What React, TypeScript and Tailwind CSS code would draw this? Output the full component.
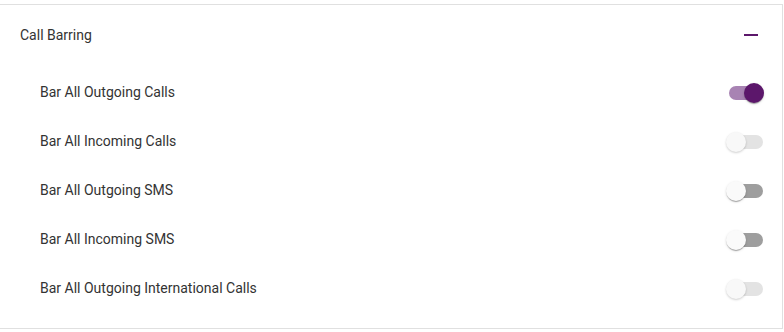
import React from "react";

type Row = { label: string; checked: boolean; disabled: boolean };

const rows: Row[] = [
  { label: "Bar All Outgoing Calls", checked: true, disabled: false },
  { label: "Bar All Incoming Calls", checked: false, disabled: true },
  { label: "Bar All Outgoing SMS", checked: false, disabled: false },
  { label: "Bar All Incoming SMS", checked: false, disabled: false },
  { label: "Bar All Outgoing International Calls", checked: false, disabled: true },
];

function Switch({ checked, disabled }: { checked: boolean; disabled: boolean }) {
  return (
    <div className="relative w-[38px] h-[20px] shrink-0">
      <div
        className={
          "absolute left-[3px] top-[3px] w-[34px] h-[14px] rounded-full " +
          (checked ? "bg-[#a883b3]" : disabled ? "bg-[#e3e3e3]" : "bg-[#9e9e9e]")
        }
      />
      {checked ? (
        <div className="absolute top-0 left-[18px] w-[20px] h-[20px] rounded-full bg-[#5c176b] shadow-[0_2px_1px_-1px_rgba(0,0,0,0.2),0_1px_1px_0_rgba(0,0,0,0.14),0_1px_3px_0_rgba(0,0,0,0.12)]" />
      ) : disabled ? (
        <div className="absolute top-0 left-0 w-[20px] h-[20px] rounded-full bg-[#f8f8f8] shadow-[0_1px_2px_0_rgba(0,0,0,0.12),0_1px_3px_0_rgba(0,0,0,0.08)]" />
      ) : (
        <div className="absolute top-0 left-0 w-[20px] h-[20px] rounded-full bg-[#fafafa] shadow-[0_2px_1px_-1px_rgba(0,0,0,0.2),0_1px_1px_0_rgba(0,0,0,0.14),0_1px_3px_0_rgba(0,0,0,0.12)]" />
      )}
    </div>
  );
}

export default function App() {
  return (
    <div className="w-[784px] h-[332px] bg-white pt-[4px] font-['Roboto',sans-serif] text-[14px] text-[#333333]">
      <div className="w-[783px] border-t border-r border-b border-[#e0e0e0]">
        <div className="h-[60px] flex items-center justify-between pl-[20px] pr-[24px]">
          <span>Call Barring</span>
          <div className="w-[14px] h-[2px] bg-[#5c176b]" />
        </div>
        <div className="pt-[3px] pb-[15px]">
          {rows.map((r) => (
            <div key={r.label} className="h-[49px] flex items-center justify-between pl-[40px] pr-[18px]">
              <span>{r.label}</span>
              <Switch checked={r.checked} disabled={r.disabled} />
            </div>
          ))}
        </div>
      </div>
    </div>
  );
}
